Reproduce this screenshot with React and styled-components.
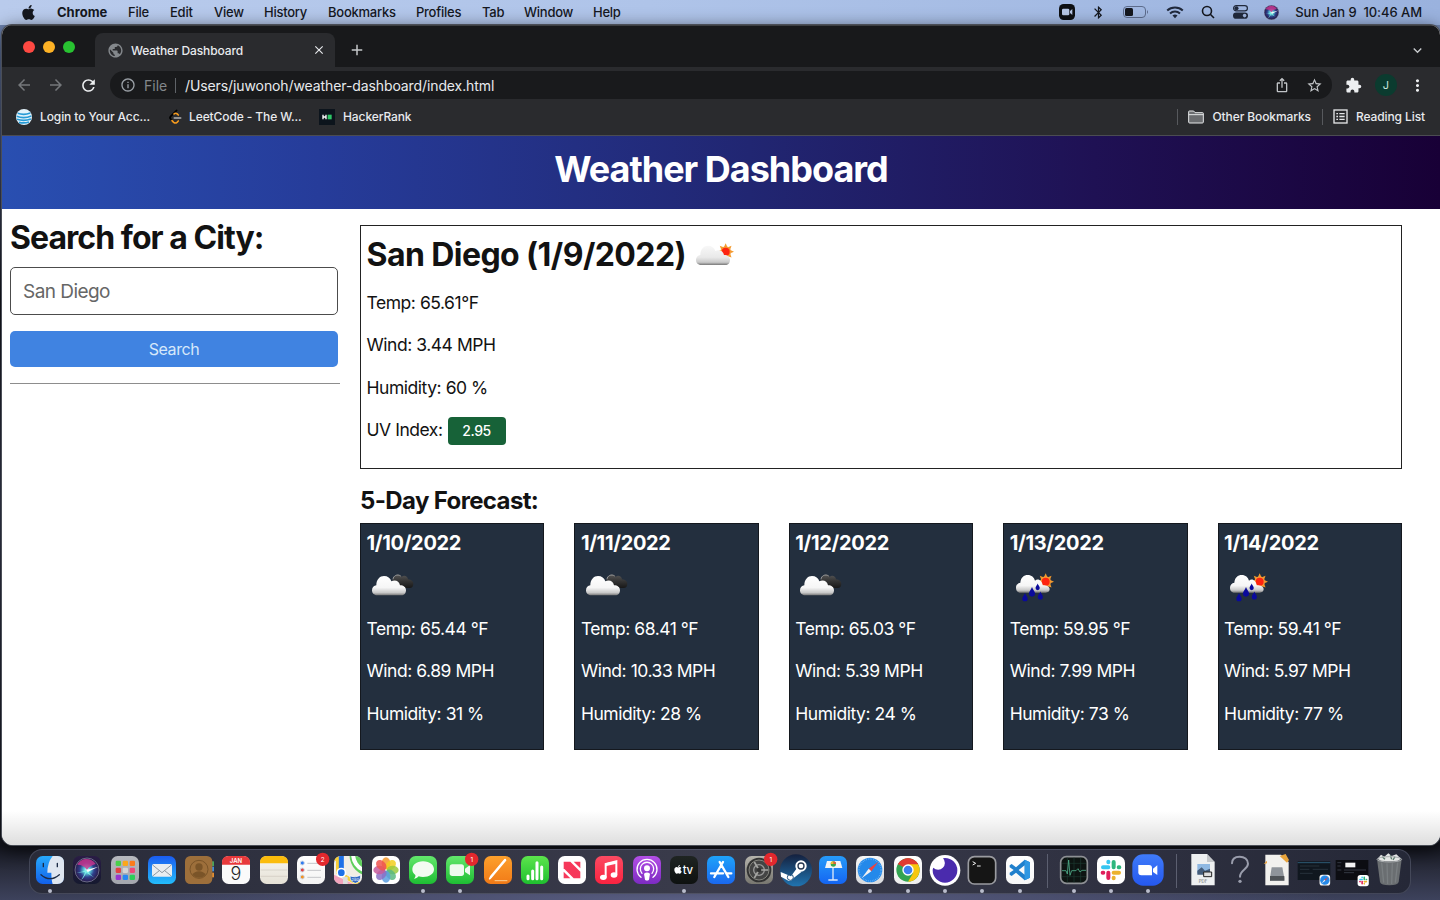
import React from "react";
import styled, { createGlobalStyle } from "styled-components";
import { FaApple } from "react-icons/fa";
import {
  MdArrowBack, MdArrowForward, MdRefresh, MdInfoOutline, MdPublic, MdClose, MdAdd,
  MdExpandMore, MdIosShare, MdStarBorder, MdExtension, MdMoreVert, MdBluetooth,
} from "react-icons/md";

const Global = createGlobalStyle`
  * { box-sizing: border-box; }
  body { margin: 0; overflow: hidden; font-family: Inter, "Liberation Sans", sans-serif; }
  h1, h2, h3, p { margin: 0; }
  svg { display: block; flex: none; }
`;

/* ---------- desktop ---------- */
const Desktop = styled.div`
  width: 1440px;
  height: 900px;
  display: flex;
  flex-direction: column;
  overflow: hidden;
  background:
    radial-gradient(ellipse 620px 22px at 50% 100%, #5a5f83 0%, #4c5070 50%, transparent 100%),
    linear-gradient(180deg, #7b93c0 0, #5d6f99 60px, #353a50 220px, #14151d 300px, #3b3f55 500px, #14161f 846px, #2a2d3d 870px, #3d425c 900px);
`;

const MenuBar = styled.header`
  height: 25px;
  flex: none;
  display: flex;
  align-items: center;
  padding: 0 18px 1px 20px;
  background: linear-gradient(90deg, #b9cbec 0%, #afc4e9 45%, #9ab2de 100%);
  color: #15181f;
  font-size: 13px;
  line-height: 24px;
`;
const MenuLogo = styled.div`width: 37px;`;
const MenuItem = styled.span`
  width: ${(p) => p.$w}px;
  font-weight: ${(p) => (p.$bold ? 700 : 450)};
  letter-spacing: ${(p) => (p.$bold ? 0 : -0.25)}px;
  white-space: nowrap;
`;
const MenuStatus = styled.div`
  margin-left: auto;
  display: flex;
  align-items: center;
`;
const StatusIcon = styled.div`margin-right: ${(p) => p.$mr}px;`;
const Clock = styled.span`
  white-space: pre;
  font-weight: 450;
  letter-spacing: -0.05px;
`;

/* ---------- browser window ---------- */
const Window = styled.section`
  width: 1438px;
  height: 820px;
  margin-left: 2px;
  flex: none;
  display: flex;
  flex-direction: column;
  border-radius: 10px 10px 11px 11px;
  overflow: hidden;
  background: #fff;
  box-shadow: 0 0 0 1px #4a4e57, 0 4px 18px rgba(0, 0, 0, 0.7);
`;
const TabStrip = styled.div`
  height: 42px;
  flex: none;
  display: flex;
  align-items: flex-end;
  background: #18191b;
  border-top: 1px solid #3d3f42;
`;
const Lights = styled.div`
  display: flex;
  gap: 8px;
  padding: 0 20px 14px 21px;
`;
const Light = styled.i`
  width: 12px;
  height: 12px;
  border-radius: 50%;
  background: ${(p) => p.$c};
`;
const Tab = styled.div`
  width: 240px;
  height: 34px;
  display: flex;
  align-items: center;
  padding: 0 9px 0 12px;
  border-radius: 8px 8px 0 0;
  background: #2a2b2e;
  color: #e8eaed;
  font-size: 12px;
`;
const TabTitle = styled.span`
  flex: 1;
  margin-left: 7px;
  font-weight: 450;
  letter-spacing: -0.13px;
`;
const NewTab = styled.div`
  margin: 0 auto 8px 13px;
  color: #c4c7ca;
`;
const TabSearch = styled.div`
  margin: 0 14px 8px 0;
  color: #c4c7ca;
`;
const Toolbar = styled.div`
  height: 36px;
  flex: none;
  display: flex;
  align-items: center;
  padding: 0 13px;
  background: #2a2b2e;
`;
const NavButton = styled.div`
  width: 32px;
  color: ${(p) => (p.$on ? "#eceef0" : "#75787b")};
`;
const Omnibox = styled.div`
  width: 1222px;
  height: 28px;
  display: flex;
  align-items: center;
  margin-left: -1px;
  padding: 0 10px;
  border-radius: 14px;
  background: #191a1c;
  color: #9aa0a6;
  font-size: 14px;
`;
const Scheme = styled.span`
  width: 31px;
  margin-left: 8px;
  color: #83878b;
`;
const SchemeRule = styled.i`
  width: 1px;
  height: 15px;
  background: #5f6368;
`;
const Url = styled.span`
  flex: 1;
  margin-left: 9px;
  color: #e8eaed;
  letter-spacing: -0.1px;
`;
const OmniAction = styled.div`
  width: 16px;
  margin-left: ${(p) => p.$ml || 0}px;
  color: #c0c3c6;
`;
const ToolbarIcon = styled.div`
  margin-left: ${(p) => p.$ml}px;
  color: #eceef0;
`;
const Avatar = styled.div`
  width: 22px;
  height: 22px;
  margin-left: 13px;
  border-radius: 50%;
  background: #0b3b2f;
  color: #c9e4db;
  font-size: 11px;
  line-height: 22px;
  text-align: center;
`;
const BookmarkBar = styled.div`
  height: 33px;
  flex: none;
  display: flex;
  align-items: center;
  padding: 0 15px 5px 14px;
  background: #2a2b2e;
  border-bottom: 1px solid #4b4c52;
  color: #e8eaed;
  font-size: 12px;
`;
const Bookmark = styled.div`
  width: ${(p) => p.$w || "auto"};
  display: flex;
  align-items: center;
  gap: ${(p) => p.$gap || 8}px;
  font-weight: 450;
  letter-spacing: -0.1px;
  white-space: nowrap;
`;
const BarSpacer = styled.div`flex: 1;`;
const BarRule = styled.i`
  width: 1px;
  height: 16px;
  margin: 0 10px 0 ${(p) => p.$ml || 0}px;
  background: #57595d;
`;

/* ---------- weather page ---------- */
const Page = styled.main`
  flex: 1;
  color: #121212;
  background: linear-gradient(180deg, #fff 0, #fff 675px, #dedede 709px);
`;
const Banner = styled.div`
  height: 73px;
  padding-top: 9px;
  background: linear-gradient(90deg, #294fb1 0%, #263c9a 22%, #212672 52%, #1f1154 76%, #180036 100%);
  color: #fff;
  text-align: center;
`;
const BannerTitle = styled.h1`
  font-size: 36px;
  font-weight: 700;
  line-height: 49px;
  letter-spacing: -1px;
`;
const Columns = styled.div`
  display: flex;
  gap: 20px;
  padding: 0 38px 0 8px;
`;
const Sidebar = styled.aside`
  width: 330px;
  padding-top: 9px;
`;
const SearchTitle = styled.h2`
  font-size: 32px;
  line-height: 40px;
  font-weight: 700;
  letter-spacing: -0.95px;
  white-space: nowrap;
`;
const CityInput = styled.div`
  width: 328px;
  height: 48px;
  margin-top: 9px;
  padding-left: 12px;
  border: 1px solid #4c4c4c;
  border-radius: 5px;
  background: #fff;
  color: #666;
  font-size: 19px;
  line-height: 47px;
  letter-spacing: -0.55px;
`;
const SearchButton = styled.div`
  width: 328px;
  height: 36px;
  margin-top: 16px;
  border-radius: 5px;
  background: #4083e1;
  color: #d6e8fa;
  font-size: 16px;
  line-height: 36px;
  text-align: center;
  letter-spacing: -0.4px;
`;
const Divider = styled.div`
  height: 1px;
  margin-top: 16px;
  background: #8d8d8d;
`;
const Content = styled.div`
  width: 1042px;
  padding-top: 16px;
`;
const Current = styled.section`
  height: 244px;
  padding: 4px 5.500px;
  border: 1px solid #222;
`;
const CurrentTitle = styled.h2`
  height: 50px;
  display: flex;
  align-items: center;
  gap: 4px;
  margin-bottom: 1px;
  font-size: 32px;
  font-weight: 700;
  line-height: 48px;
  white-space: nowrap;
  letter-spacing: -0.57px;
`;
const Reading = styled.p`
  height: 42.5px;
  display: flex;
  align-items: center;
  font-size: 17.5px;
  white-space: pre;
  letter-spacing: -0.46px;
`;
const UvBadge = styled.span`
  width: 58px;
  height: 28px;
  margin: 3px 0 0 5px;
  border-radius: 4px;
  background: #176238;
  color: #fff;
  font-size: 14px;
  font-weight: 500;
  line-height: 27px;
  text-align: center;
  letter-spacing: -0.4px;
`;
const ForecastTitle = styled.h3`
  margin-top: 16px;
  font-size: 24px;
  line-height: 32px;
  font-weight: 700;
  letter-spacing: -0.63px;
`;
const Cards = styled.div`
  display: grid;
  grid-template-columns: repeat(5, 1fr);
  gap: 30px;
  margin-top: 6px;
`;
const Card = styled.article`
  height: 227px;
  padding: 4px 5.500px;
  border: 1px solid #14181e;
  background: #232f3e;
  color: #fff;
`;
const CardDate = styled.div`
  height: 30px;
  margin-bottom: 2px;
  font-size: 20px;
  line-height: 30px;
  font-weight: 700;
  letter-spacing: -0.33px;
`;
const CardReadings = styled.div`margin-top: -2.800px;`;

/* ---------- dock ---------- */
const Dock = styled.nav`
  width: 1382px;
  height: 45px;
  margin: 4px 0 0 29px;
  flex: none;
  display: flex;
  padding: 2px 0 0 1.3px;
  border: 1px solid rgba(120, 125, 150, 0.35);
  border-radius: 13px;
  background: linear-gradient(90deg, #292b39 0%, #323443 25%, #3a3b4b 50%, #2f3141 78%, #252837 100%);
`;
const DockSlot = styled.div`
  width: 37.3px;
  display: flex;
  flex-direction: column;
  align-items: center;
`;
const RunDot = styled.i`
  width: 4px;
  height: 4px;
  margin-top: 1px;
  border-radius: 50%;
  background: #b9bccb;
`;
const DockRule = styled.i`
  width: 1px;
  height: 34px;
  margin: 2px 7.2px 0 8.7px;
  background: #5c5f70;
`;

const Cloud = ({ fill, ...r }) => (
  <path fill={fill} d="M31 106C20 106 15 99 15 91C15 82 21 77 28 76C28 58 39 48 51 48C62 48 70 54 73 64C84 58 97 63 99 76C110 76 117 82 117 91C117 100 111 106 103 106Z" {...r} />
);
const Drop = ({ x, y, s = 1 }) => (
  <path fill="#0a0a9c" transform={`translate(${x} ${y}) scale(${s})`} d="M0-12C2-5 8-1 8 5A8 8 0 0 1-8 5C-8-1-2-5 0-12Z" />
);
const Sun = () => (
  <g>
    {[0, 45, 90, 135, 180, 225, 270, 315].map((a) => (
      <path key={a} d="M-5-14L0-25L5-14Z" fill="#f39a2c" transform={`translate(107 65) rotate(${a})`} />
    ))}
    <circle cx="107" cy="65" r="16" fill="#f79a35" />
    <circle cx="107" cy="65" r="12" fill="#fd2410" />
  </g>
);
const WeatherIcon = ({ kind }) => (
  <svg width="50" height="50" viewBox="0 0 150 150">
    <defs>
      <linearGradient id={"cl" + kind} x1="0" y1="0" x2="0" y2="1">
        <stop offset="0" stopColor={kind === "few" ? "#f8f8f8" : "#fff"} />
        <stop offset=".6" stopColor={kind === "few" ? "#e9e9e9" : "#f6f6f6"} />
        <stop offset=".86" stopColor="#c9c9c9" />
        <stop offset="1" stopColor="#777" />
      </linearGradient>
      <linearGradient id={"dk" + kind} x1="0" y1="0" x2="0" y2="1">
        <stop offset="0" stopColor="#555" />
        <stop offset=".5" stopColor="#333" />
        <stop offset="1" stopColor="#181818" />
      </linearGradient>
    </defs>
    {kind === "broken" && (
      <g>
        <path fill={`url(#dk${kind})`} d="M78 84C70 74 76 60 80 54C86 41 100 42 104 50C112 44 122 49 123 58C133 59 139 65 139 71C139 79 135 84 128 84Z" />
        <path d="M78 58C79 47 91 41 101 48" fill="none" stroke="#999" strokeWidth="3" />
        <Cloud fill={`url(#cl${kind})`} />
      </g>
    )}
    {kind === "few" && (<g><Sun /><Cloud fill={`url(#cl${kind})`} transform="translate(3 -1)" /></g>)}
    {kind === "rain" && (
      <g>
        <Sun />
        <path fill={`url(#cl${kind})`} d="M32 98C22 98 18 91 18 83C18 75 23 69 31 68C32 53 42 45 53 45C65 45 72 52 75 62C84 54 96 61 98 76C110 76 119 80 119 88C119 94 114 98 107 98Z" />
        <Drop x={45} y={111} /><Drop x={66} y={95} s={1.15} /><Drop x={83} y={80} s={0.8} /><Drop x={91} y={106} s={0.95} />
      </g>
    )}
  </svg>
);

/* Dock icons share a 108-unit box; the standard tile spans 12 to 96. */
const Icon = ({ children }) => (
  <svg width="36" height="36" viewBox="0 0 108 108" overflow="visible">{children}</svg>
);
const Grad = ({ id, a, b }) => (
  <linearGradient id={id} x1="0" y1="0" x2="0" y2="1"><stop stopColor={a} /><stop offset="1" stopColor={b} /></linearGradient>
);
const Tile = ({ id, a, b = a }) => (
  <>
    <Grad id={"t" + id} a={a} b={b} />
    <rect x="12" y="12" width="84" height="84" rx="20" fill={`url(#t${id})`} />
  </>
);
const Badge = ({ n }) => (
  <g>
    <circle cx="89" cy="22" r="20" fill="#e3282d" />
    <text x="89" y="29" fontSize="19" fill="#fff" textAnchor="middle" fontFamily="Inter">{n}</text>
  </g>
);
const SlackMark = () => (
  <g strokeWidth="12" strokeLinecap="round">
    <path d="M46 29V31M30 46H46" stroke="#36c5f0" />
    <path d="M62 30V46M77 46H79" stroke="#2eb67d" />
    <path d="M62 62H78M62 77V79" stroke="#ecb22e" />
    <path d="M46 62V78M29 62H31" stroke="#e01e5a" />
  </g>
);
const Compass = () => (
  <g>
    <circle cx="54" cy="54" r="37" fill="#2489ea" />
    <circle cx="54" cy="54" r="33" fill="none" stroke="#8cc6fa" strokeWidth="4" strokeDasharray="1.5 4" />
    <path d="M79 29L58 58L50 50Z" fill="#f2403b" /><path d="M29 79L50 50L58 58Z" fill="#f2f2f2" />
  </g>
);
const Siri = () => (
  <g>
    <radialGradient id="siri"><stop stopColor="#fff" /><stop offset=".25" stopColor="#5cd3e0" /><stop offset=".6" stopColor="#2f3f8c" /><stop offset="1" stopColor="#2a1a4a" /></radialGradient>
    <circle cx="54" cy="54" r="36" fill="url(#siri)" stroke="#8a8fa5" strokeWidth="2" />
    <path d="M25 38C35 18 66 14 80 36C68 40 60 44 54 54C48 44 38 38 25 38Z" fill="#d0358e" opacity=".8" />
    <path d="M22 62C38 60 48 58 54 52C58 64 68 72 78 78C66 70 56 66 52 60C48 72 42 80 36 84C44 74 48 64 48 60Z" fill="#7ff0e6" />
    <path d="M52 54L88 44L56 60Z" fill="#fff" />
  </g>
);

const DOCK = {
  finder: <><Tile id="fi" a="#27a9fb" b="#1260ea" />
    <path d="M62 12H76Q96 12 96 32V76Q96 96 76 96H62Q58 84 58 62H46Q46 32 62 12Z" fill="#dfe6f0" />
    <path d="M34 34V44M76 34V44M27 68Q54 92 82 68" fill="none" stroke="#1c2a44" strokeWidth="4" strokeLinecap="round" /></>,
  siri: <><Tile id="si" a="#2a1c45" b="#15192f" /><Siri /></>,
  launchpad: <><Tile id="lp" a="#b6b8be" b="#a4a7ae" />
    {["#4bd04b", "#fba71b", "#fb7a1c", "#e34242", "#d5d5d5", "#f0467a", "#9735cf", "#2788f2", "#2ccd58"].map((c, i) => (
      <rect key={i} x={26 + (i % 3) * 21} y={26 + Math.floor(i / 3) * 21} width="16" height="16" rx="4" fill={c} />))}</>,
  mail: <><Tile id="ma" a="#1b5cf0" b="#23bdfb" /><rect x="24" y="36" width="60" height="38" rx="5" fill="#e9edf0" />
    <path d="M26 39L54 62L82 39M26 72L46 56M82 72L62 56" fill="none" stroke="#7d8891" strokeWidth="2.5" /></>,
  contacts: <><rect x="85" y="28" width="14" height="14" fill="#48a55c" /><rect x="85" y="44" width="14" height="14" fill="#3e8ede" /><rect x="85" y="62" width="14" height="14" fill="#e28d32" />
    <rect x="12" y="12" width="82" height="84" rx="16" fill="#9d6f3b" /><circle cx="54" cy="52" r="27" fill="none" stroke="#7a5428" strokeWidth="3" />
    <circle cx="54" cy="45" r="11" fill="#7a5428" /><path d="M34 69Q40 58 54 58Q68 58 74 69Q54 86 34 69Z" fill="#7a5428" /></>,
  calendar: <><Tile id="ca" a="#fafafa" /><path d="M12 38V32Q12 12 32 12H76Q96 12 96 32V38Z" fill="#e8393b" />
    <text x="54" y="33" fontSize="18" fontWeight="600" fill="#fff" textAnchor="middle" fontFamily="Inter">JAN</text>
    <text x="54" y="85" fontSize="54" fontWeight="350" fill="#262626" textAnchor="middle" fontFamily="Inter">9</text></>,
  notes: <><Tile id="no" a="#f8f6f0" b="#e5e1d6" /><path d="M12 34V32Q12 12 32 12H76Q96 12 96 32V34Z" fill="#fbbc0c" />
    <path d="M14 54H94M14 73H94" stroke="#cdc9be" strokeWidth="2" /></>,
  reminders: <><Tile id="re" a="#fff" b="#f3f3f3" />
    {["#2f7cf0", "#e24242", "#f09324"].map((c, i) => <g key={c}><circle cx="28" cy={33 + i * 21} r="6" fill={c} stroke="#cdd6e6" strokeWidth="3" /><path d={`M43 ${34 + i * 21}H84`} stroke="#c4c6c9" strokeWidth="3" /></g>)}<Badge n="2" /></>,
  maps: <><clipPath id="mp"><rect x="12" y="12" width="84" height="84" rx="20" /></clipPath><g clipPath="url(#mp)">
    <rect width="108" height="108" fill="#f1eee6" /><path d="M60 0A60 60 0 0 0 108 70V0Z" fill="#5fcf5c" /><path d="M70 0A50 50 0 0 0 108 56" fill="none" stroke="#fff" strokeWidth="12" />
    <path d="M12 68L96 108H12Z" fill="#f2a3bc" /><path d="M10 20H24V62L100 104" fill="none" stroke="#f8cf38" strokeWidth="12" /><path d="M46 74V108" stroke="#ddd" strokeWidth="14" />
    <path d="M34 10V60" stroke="#1e71e8" strokeWidth="15" /><circle cx="34" cy="62" r="15" fill="#fff" /><circle cx="34" cy="62" r="10" fill="#1e71e8" />
    <path d="M60 72Q75 78 92 70Q92 90 76 94Q60 90 60 72Z" fill="#3069c4" stroke="#fff" strokeWidth="2" /></g>
    <text x="76" y="87" fontSize="12" fill="#fff" textAnchor="middle" fontFamily="Inter">280</text></>,
  photos: <><Tile id="ph" a="#fff" />{["#f6992a", "#f2cf1f", "#9bca3d", "#5bb982", "#5b9fe0", "#8b6fc6", "#c65a9c", "#ef5350"].map((c, i) => (
    <ellipse key={c} cx="54" cy="34" rx="13" ry="18" fill={c} opacity=".85" transform={`rotate(${i * 45} 54 54)`} />))}</>,
  messages: <><Tile id="ms" a="#63e76c" b="#1ebd33" /><path d="M54 28C75 28 87 39 87 52C87 66 73 75 54 75C49 75 45 74 41 73C37 78 32 80 27 80C31 76 32 73 31 69C25 65 22 59 22 52C22 39 34 28 54 28Z" fill="#f3fbf2" /></>,
  facetime: <><Tile id="ft" a="#63e76c" b="#1ebd33" /><rect x="23" y="37" width="43" height="35" rx="8" fill="#eefaee" /><path d="M69 50L84 39V70L69 60Z" fill="#eefaee" /><Badge n="1" /></>,
  pages: <><Tile id="pa" a="#fda02c" b="#f17a17" /><path d="M77 25L34 76L28 82L32 73L72 25Q76 20 77 25Z" fill="#fff" stroke="#fff" strokeWidth="4" /><path d="M44 86H82" stroke="#fbcf92" strokeWidth="3" /></>,
  numbers: <><Tile id="nu" a="#5ce44c" b="#1fc02f" /><path d="M33 80V72M47 80V57M60 80V32M74 80V45" stroke="#fff" strokeWidth="9" strokeLinecap="round" /></>,
  news: <><Tile id="ne" a="#fff" /><path d="M29 29H49L79 59V79H59L29 49Z" fill="#f6385a" /><path d="M59 29H79V49ZM29 59V79H49Z" fill="#f6385a" /></>,
  music: <><Tile id="mu" a="#fb4a62" b="#fa2340" /><path d="M44 76V36L76 28V68" fill="none" stroke="#fff" strokeWidth="6" /><path d="M43 43L76 35V27L43 34Z" fill="#fff" /><ellipse cx="37" cy="76" rx="10" ry="8" fill="#fff" /><ellipse cx="69" cy="69" rx="10" ry="8" fill="#fff" /></>,
  podcasts: <><Tile id="po" a="#b34fe6" b="#7d2bc2" /><circle cx="54" cy="49" r="9" fill="#fff" /><path d="M45 65Q54 58 63 65L60 83Q54 88 48 83Z" fill="#fff" />
    <path d="M39 64A20 20 0 1 1 69 64M36 76A30 30 0 1 1 72 76" fill="none" stroke="#fff" strokeWidth="4" strokeLinecap="round" /></>,
  tv: <><Tile id="tv" a="#1f2422" b="#0e1110" /><FaApple x="21" y="37" size="30" color="#fff" /><text x="50" y="66" fontSize="34" fontWeight="500" fill="#fff" fontFamily="Inter" letterSpacing="-1">tv</text></>,
  appstore: <><Tile id="as" a="#1fa3fa" b="#1a68ee" /><path d="M60 30L34 75M50 30L76 75M24 64H60M72 64H85" stroke="#fff" strokeWidth="7" strokeLinecap="round" /></>,
  settings: <><Tile id="se" a="#b5b3ac" b="#787770" /><circle cx="54" cy="54" r="37" fill="#333" /><circle cx="54" cy="54" r="30" fill="#444" stroke="#85857f" strokeWidth="3" />
    <circle cx="54" cy="54" r="16" fill="none" stroke="#999" strokeWidth="4" /><path d="M54 54H82M54 54L40 30M54 54L40 78" stroke="#a5a5a2" strokeWidth="5" /><circle cx="54" cy="54" r="7" fill="#333" /><Badge n="1" /></>,
  steam: <><Grad id="st" a="#15213f" b="#2074b0" /><circle cx="54" cy="55" r="48" fill="url(#st)" />
    <circle cx="69" cy="42" r="17" fill="#fff" /><circle cx="69" cy="42" r="9" fill="none" stroke="#25364f" strokeWidth="4" /><path d="M8 60L39 73L57 48L70 60L47 78Q41 90 31 86L9 74Z" fill="#fff" /><circle cx="37" cy="76" r="9" fill="none" stroke="#23527e" strokeWidth="3" /></>,
  keynote: <><Tile id="ke" a="#269bfa" b="#1465f2" /><path d="M36 27H76L82 48H30Z" fill="#f2f4f6" /><path d="M54 48V82M40 84H68" stroke="#dde9f8" strokeWidth="4" /><circle cx="55" cy="36" r="8" fill="#3aa84c" /><path d="M55 36V28A8 8 0 0 1 63 36Z" fill="#e65a3a" /><path d="M55 36H47A8 8 0 0 1 55 28Z" fill="#f1b92a" /></>,
  safari: <><Tile id="sa" a="#f6f6f6" b="#d9dadd" /><Compass /></>,
  chrome: <><Tile id="ch" a="#fff" b="#eee" /><circle cx="54" cy="54" r="35" fill="#33a451" />
    <path d="M54 54L23.7 36.5A35 35 0 0 1 84.3 36.5Z" fill="#e03c32" /><path d="M54 36H83.500A35 35 0 0 1 54 89L69.500 63Z" fill="#f8c70e" /><path d="M23.700 36.500A35 35 0 0 1 84.300 36.500L54 37Z" fill="#e03c32" />
    <path d="M23.700 36.500L39 63L54 54Z" fill="#33a451" /><circle cx="54" cy="54" r="17" fill="#fff" /><circle cx="54" cy="54" r="13" fill="#3d7ff0" /></>,
  insomnia: <><circle cx="54" cy="55" r="46" fill="#fff" /><path d="M54 18A37 37 0 1 1 17 55Q17 51 19 47A18 18 0 0 0 48 19Q51 18 54 18Z" fill="#4a2bad" /></>,
  terminal: <><rect x="13" y="14" width="82" height="82" rx="18" fill="#151515" stroke="#9a9ba0" strokeWidth="5" /><path d="M26 29L35 34L26 39M39 42H50" fill="none" stroke="#f1f1f1" strokeWidth="3" /></>,
  vscode: <><Tile id="vs" a="#fff" b="#f6f6f6" /><path d="M68 23L84 31V77L68 85L42 62L29 72L23 68V62L35 54L23 46V40L29 36L42 46ZM68 40L50 54L68 68Z" fill="#1f7fcc" fillRule="evenodd" /><path d="M68 23L84 31V77L68 85Z" fill="#2f97e2" /></>,
  activity: <><rect x="14" y="14" width="80" height="80" rx="17" fill="#0d1412" stroke="#8d9094" strokeWidth="5" /><path d="M18 34H90M18 74H90M34 17V91M54 17V91M74 17V91" stroke="#1c3a31" strokeWidth="2" /><path d="M18 56H30L34 66L38 24L42 70L47 56H60L66 50L72 60L78 55H90" fill="none" stroke="#4fae8a" strokeWidth="2.500" /></>,
  slack: <><Tile id="sl" a="#fff" /><SlackMark /></>,
  zoom: <><Grad id="tzo" a="#3f7bfa" b="#2558ee" /><rect x="7" y="7" width="94" height="94" rx="32" fill="url(#tzo)" /><path d="M25 39H57Q66 39 66 48V70H34Q25 70 25 61Z" fill="#fff" /><path d="M69 50L82 40V69L69 60Z" fill="#fff" /></>,
  pdf: <><path d="M19 6H66L89 30V100H19Z" fill="#eef0f1" /><path d="M66 6V30H89Z" fill="#c4c7ca" /><rect x="37" y="36" width="38" height="28" fill="#8fb8e2" /><path d="M37 56L50 46L60 56L75 50V68H37Z" fill="#445c7a" /><path d="M56 60H80V74H56Z" fill="#ddd" stroke="#222" strokeWidth="3" /><text x="54" y="92" fontSize="13" fill="#666" textAnchor="middle" fontFamily="Inter">PDF</text></>,
  help: <><path d="M30 34C30 20 40 14 53 14C67 14 78 22 78 35C78 52 54 53 54 74" fill="none" stroke="#9a9dac" strokeWidth="6" strokeLinecap="round" /><circle cx="54" cy="88" r="5" fill="#9a9dac" /></>,
  disk: <><path d="M19 8H66L89 30V100H19Z" fill="#f2f1ee" /><path d="M62 12L80 6L90 24L84 32Z" fill="#e8a43c" /><path d="M14 36L24 26V34Z" fill="#eda33a" /><path d="M38 46H70L76 78V86H33V78Z" fill="#8f949a" /><path d="M33 72H76V86H33Z" fill="#4f5357" /></>,
  thumbSafari: <><rect x="5" y="28" width="98" height="56" fill="#10171f" /><path d="M5 32H103" stroke="#2c5a74" strokeWidth="3" /><path d="M12 42H70M12 52H40M50 52H96M12 64H50" stroke="#27323b" strokeWidth="3" /><g transform="translate(66 64) scale(.38)"><Tile id="s2" a="#f5f5f5" /><Compass /></g></>,
  thumbSlack: <><rect x="5" y="24" width="98" height="60" fill="#0c0d12" /><rect x="34" y="32" width="30" height="14" fill="#f3f3f3" /><path d="M10 32H22M10 42H20M10 54H22M30 54H96M30 62H60" stroke="#343843" strokeWidth="3" /><g transform="translate(66 64) scale(.4)"><Tile id="k2" a="#fff" /><SlackMark /></g></>,
  trash: <><path d="M18 22H92L83 90Q80 100 55 100Q30 100 27 90Z" fill="#6a6e71" /><path d="M32 32L38 92M48 34L50 96M64 34L62 96M80 32L73 92" stroke="#84898c" strokeWidth="4" opacity=".6" />
    <path d="M20 20L30 8L40 14L52 4L62 12L76 7L90 20L80 26L55 28L30 26Z" fill="#e5e7e6" /><path d="M34 14L42 22M58 10L62 22M72 14L66 24" stroke="#5b7c6c" strokeWidth="4" /><ellipse cx="55" cy="22" rx="37" ry="8" fill="none" stroke="#a7abad" strokeWidth="3" /></>,
};
const DOCK_GROUPS = [
  ["finder", "siri", "launchpad", "mail", "contacts", "calendar", "notes", "reminders", "maps", "photos", "messages", "facetime", "pages", "numbers", "news", "music", "podcasts", "tv", "appstore", "settings", "steam", "keynote", "safari", "chrome", "insomnia", "terminal", "vscode"],
  ["activity", "slack", "zoom"],
  ["pdf", "help", "disk", "thumbSafari", "thumbSlack", "trash"],
];
const RUNNING = new Set(["finder", "messages", "facetime", "tv", "safari", "chrome", "insomnia", "terminal", "vscode", "activity", "slack", "zoom"]);

const MENU = [["File", 42], ["Edit", 44], ["View", 50], ["History", 64], ["Bookmarks", 88], ["Profiles", 66], ["Tab", 42], ["Window", 69], ["Help", 40]];
const DAYS = [
  ["1/10/2022", "broken", "65.44", "6.89", 31],
  ["1/11/2022", "broken", "68.41", "10.33", 28],
  ["1/12/2022", "broken", "65.03", "5.39", 24],
  ["1/13/2022", "rain", "59.95", "7.99", 73],
  ["1/14/2022", "rain", "59.41", "5.97", 77],
];

export default function App() {
  return (
    <Desktop>
      <Global />
      <MenuBar>
        <MenuLogo><FaApple size={17} /></MenuLogo>
        <MenuItem $w={71} $bold>Chrome</MenuItem>
        {MENU.map(([label, w]) => <MenuItem key={label} $w={w}>{label}</MenuItem>)}
        <MenuStatus>
          <StatusIcon $mr={16}><svg width="16" height="16" viewBox="0 0 48 48"><rect width="48" height="48" rx="14" fill="#0e1013" /><rect x="9" y="14" width="22" height="20" rx="4" fill="#b6c6e4" /><path d="M33 21L40 15V33L33 27Z" fill="#b6c6e4" /></svg></StatusIcon>
          <StatusIcon $mr={17}><MdBluetooth size={15} /></StatusIcon>
          <StatusIcon $mr={17}><svg width="26" height="12" viewBox="0 0 26 12"><rect x=".5" y=".5" width="22" height="11" rx="3.500" fill="none" stroke="#5d6c8c" /><rect x="2" y="2" width="8" height="8" rx="1.500" fill="#15181f" /><path d="M24 4Q26 6 24 8Z" fill="#5d6c8c" /></svg></StatusIcon>
          <StatusIcon $mr={17}><svg width="18" height="13" viewBox="0 0 18 13" fill="none" stroke="#20293c" strokeWidth="2"><path d="M1.200 4.500A11.500 11.500 0 0 1 16.800 4.500M4 7.500A7.500 7.500 0 0 1 14 7.500" /><path d="M6.500 9.600A4 4 0 0 1 11.500 9.600L9 12.200Z" fill="#20293c" stroke="none" /></svg></StatusIcon>
          <StatusIcon $mr={18}><svg width="14" height="14" viewBox="0 0 14 14" fill="none" stroke="#15181f" strokeWidth="1.600"><circle cx="6" cy="6" r="4.500" /><path d="M9.300 9.300L13 13" /></svg></StatusIcon>
          <StatusIcon $mr={16}><svg width="15" height="14" viewBox="0 0 15 14"><rect x=".6" y=".6" width="13.800" height="5.300" rx="2.600" fill="none" stroke="#20293c" strokeWidth="1.200" /><circle cx="3.500" cy="3.200" r="2" fill="#20293c" /><rect y="7.500" width="15" height="6.300" rx="3.100" fill="#20293c" /><circle cx="11.600" cy="10.600" r="1.800" fill="#9fb5df" /></svg></StatusIcon>
          <StatusIcon $mr={16}><svg width="15" height="15" viewBox="17 17 74 74"><Siri /></svg></StatusIcon>
          <Clock>Sun Jan 9  10:46 AM</Clock>
        </MenuStatus>
      </MenuBar>

      <Window>
        <TabStrip>
          <Lights><Light $c="#fe4942" /><Light $c="#fdb225" /><Light $c="#28c231" /></Lights>
          <Tab>
            <MdPublic size={17} color="#84888c" />
            <TabTitle>Weather Dashboard</TabTitle>
            <MdClose size={14} />
          </Tab>
          <NewTab><MdAdd size={18} /></NewTab>
          <TabSearch><MdExpandMore size={17} /></TabSearch>
        </TabStrip>
        <Toolbar>
          <NavButton><MdArrowBack size={18} /></NavButton>
          <NavButton><MdArrowForward size={18} /></NavButton>
          <NavButton $on><MdRefresh size={19} /></NavButton>
          <Omnibox>
            <MdInfoOutline size={16} />
            <Scheme>File</Scheme>
            <SchemeRule />
            <Url>/Users/juwonoh/weather-dashboard/index.html</Url>
            <OmniAction><MdIosShare size={16} /></OmniAction>
            <OmniAction $ml={16}><MdStarBorder size={17} /></OmniAction>
          </Omnibox>
          <ToolbarIcon $ml={13}><MdExtension size={17} /></ToolbarIcon>
          <Avatar>J</Avatar>
          <ToolbarIcon $ml={11}><MdMoreVert size={19} /></ToolbarIcon>
        </Toolbar>
        <BookmarkBar>
          <Bookmark $w="152px">
            <svg width="16" height="16" viewBox="0 0 48 48"><circle cx="24" cy="24" r="24" fill="#e3f3fb" /><path d="M5 13Q24 20 43 12M2 22Q24 30 46 21M3 31Q24 38 45 30M9 40Q24 44 39 39" fill="none" stroke="#279bd6" strokeWidth="5" /></svg>
            Login to Your Acc...
          </Bookmark>
          <Bookmark $w="151px" $gap={6}>
            <svg width="15" height="16" viewBox="0 0 45 48" fill="none" strokeWidth="5" strokeLinecap="round"><path d="M26 4L8 22Q4 26 8 30L12 34" stroke="#000" /><path d="M12 35L17 40Q22 44 27 40L31 36M18 15Q22 11 27 14L31 18" stroke="#f39a1e" /><path d="M19 27H38" stroke="#b3b3b3" /></svg>
            LeetCode - The W...
          </Bookmark>
          <Bookmark>
            <svg width="16" height="16" viewBox="0 0 48 48"><rect width="48" height="48" fill="#0c141c" /><path d="M12 17V31M21 17V31M12 24H21" stroke="#fff" strokeWidth="4" /><rect x="26" y="17" width="12" height="14" fill="#2ec866" /></svg>
            HackerRank
          </Bookmark>
          <BarSpacer />
          <BarRule />
          <Bookmark>
            <svg width="16" height="14" viewBox="0 0 48 42"><path d="M2 5Q2 3 4 3H17L21 8H44Q46 8 46 10V36Q46 39 43 39H5Q2 39 2 36Z" fill="#6a6c6f" stroke="#e4e6e8" strokeWidth="3" /><path d="M2 14H46" stroke="#e4e6e8" strokeWidth="3" /></svg>
            Other Bookmarks
          </Bookmark>
          <BarRule $ml={11} />
          <Bookmark>
            <svg width="15" height="15" viewBox="0 0 45 45" fill="none" stroke="#e4e6e8" strokeWidth="4"><rect x="3" y="3" width="39" height="39" /><path d="M10 14H15M19 14H35M10 22.500H15M19 22.500H35M10 31H15M19 31H35" /></svg>
            Reading List
          </Bookmark>
        </BookmarkBar>

        <Page>
          <Banner><BannerTitle>Weather Dashboard</BannerTitle></Banner>
          <Columns>
            <Sidebar>
              <SearchTitle>Search for a City:</SearchTitle>
              <CityInput>San Diego</CityInput>
              <SearchButton>Search</SearchButton>
              <Divider />
            </Sidebar>
            <Content>
              <Current>
                <CurrentTitle>San Diego (1/9/2022)<WeatherIcon kind="few" /></CurrentTitle>
                <Reading>Temp: 65.61°F</Reading>
                <Reading>Wind: 3.44 MPH</Reading>
                <Reading>Humidity: 60 %</Reading>
                <Reading>UV Index:<UvBadge>2.95</UvBadge></Reading>
              </Current>
              <ForecastTitle>5-Day Forecast:</ForecastTitle>
              <Cards>
                {DAYS.map(([date, kind, temp, wind, hum]) => (
                  <Card key={date}>
                    <CardDate>{date}</CardDate>
                    <WeatherIcon kind={kind} />
                    <CardReadings>
                      <Reading>{`Temp: ${temp} °F`}</Reading>
                      <Reading>{`Wind: ${wind} MPH`}</Reading>
                      <Reading>{`Humidity: ${hum} %`}</Reading>
                    </CardReadings>
                  </Card>
                ))}
              </Cards>
            </Content>
          </Columns>
        </Page>
      </Window>

      <Dock>
        {DOCK_GROUPS.map((group, g) => (
          <React.Fragment key={g}>
            {g > 0 && <DockRule />}
            {group.map((name) => (
              <DockSlot key={name}>
                <Icon>{DOCK[name]}</Icon>
                {RUNNING.has(name) && <RunDot />}
              </DockSlot>
            ))}
          </React.Fragment>
        ))}
      </Dock>
    </Desktop>
  );
}
